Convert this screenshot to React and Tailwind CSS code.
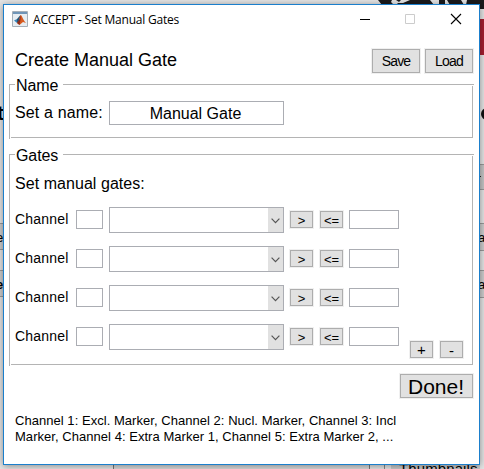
import React from 'react';

const font = "font-['Liberation_Sans',Arial,sans-serif]";

function Button({ className = '', children }) {
  return (
    <button
      className={`flex shrink-0 items-center justify-center whitespace-nowrap border border-[#adadad] bg-[#e1e1e1] text-black ring-1 ring-[#f0f0f0] ${className}`}
    >
      {children}
    </button>
  );
}

function Panel({ title, className, children }) {
  return (
    <section className={`relative ml-[5px] w-[464px] border border-[#b4b4b4] ${className}`}>
      <h2 className="absolute -top-[10px] left-[5px] h-[19px] w-[48px] bg-white pl-px text-[16px] leading-[21px] tracking-[-0.1px]">
        {title}
      </h2>
      <i className="absolute -right-[2px] -top-px h-px w-px bg-[#b4b4b4]" />
      <i className="absolute -right-px top-0 h-px w-px bg-white" />
      <i className="absolute -bottom-[2px] -left-px h-px w-px bg-[#b4b4b4]" />
      <i className="absolute -bottom-px left-0 h-px w-px bg-white" />
      {children}
    </section>
  );
}

function GateRow() {
  return (
    <div className="flex h-[26px] items-center">
      <span className="w-[61px] pb-[2px] text-[14px] leading-[16px] tracking-[0.2px]">Channel</span>
      <div className="-mt-px h-[19px] w-[27px] border border-[#abadb3]" />
      <div className="ml-[6px] flex h-[26px] w-[175px] justify-end border border-[#abadb3]">
        <div className="flex w-[15px] items-center justify-center bg-[#e1e1e1]">
          <svg className="mt-[2px] h-[6px] w-[9px]" viewBox="0 0 9 6" fill="none" stroke="#555" strokeWidth="1.2">
            <path d="M.6 .7 4.5 4.6 8.4 .7" />
          </svg>
        </div>
      </div>
      <Button className="-mt-px ml-[6px] h-[17px] w-[23px] text-[13px]"><span className="pt-[2px]">&gt;</span></Button>
      <Button className="-mt-px ml-[7px] h-[17px] w-[23px] text-[13px]"><span className="pt-[2px]">&lt;=</span></Button>
      <div className="-mt-px ml-[6px] h-[19px] w-[50px] border border-[#abadb3]" />
    </div>
  );
}

function Backdrop() {
  return (
    <div className="absolute inset-0 overflow-hidden bg-[#e4e4e4]">
      <svg className="absolute left-[376px] top-0 h-[10px] w-[108px]" viewBox="0 0 108 10" fill="#1a1a1c">
        <path d="M2 0h14l-1 2 3 3H6zM20 0h5l-2 2zM34 0h20l4 5H20l2-2h5zM63 0h6v5h-6zM71 0h14l3 5H74zM91 0h17v9h-4V5H90z" />
      </svg>
      <div className="absolute left-[479px] top-[19px] h-[36px] w-[5px] bg-[#a31f2f]" />
      <div className="absolute left-[481px] top-[108px] h-[12px] w-[12px] rounded-full bg-[#111]" />
      <div className="absolute -left-[3px] top-[102px] text-[20px] font-bold leading-[22px]">t</div>
      <div className="absolute left-0 top-[223px] h-[27px] w-[4px] border-y border-[#999] bg-[#ccc] text-[13px] leading-[27px]"><span className="-ml-[4px]">e</span></div>
      <div className="absolute left-0 top-[270px] h-[27px] w-[4px] border-y border-[#999] bg-[#ccc] text-[13px] font-bold leading-[27px]"><span className="-ml-[4px]">e</span></div>
      <div className="absolute left-[478px] top-[164px] h-[26px] w-[8px] border-y border-[#999] bg-[#c4c4c4]">
        <div className="ml-[2px] mt-[11px] h-px w-px bg-[#222]" />
      </div>
      <div className="absolute left-[478px] top-[223px] h-[28px] w-[8px] border-y border-[#999] bg-[#ccc] text-[13px] leading-[27px]">a</div>
      <div className="absolute left-[478px] top-[270px] h-[28px] w-[8px] border-y border-[#999] bg-[#ccc] text-[13px] leading-[27px]">a</div>
      <div className="absolute left-[113px] top-[465px] h-[4px] w-[257px] border-x border-[#777] bg-[#d8d8d8]" />
      <div className="absolute left-[384px] top-[465px] h-[4px] w-px bg-[#888]" />
      <div className="absolute left-[391px] top-[459px] h-[20px] w-[89px] bg-[#c8c8c8] pl-[8px] text-[15px] leading-[20px] tracking-[0.1px]">Thumbnails</div>
    </div>
  );
}

export default function App() {
  return (
    <main className={`relative h-[469px] w-[484px] overflow-hidden text-black ${font}`}>
      <Backdrop />
      <div className="absolute left-[3px] top-[4px] flex h-[461px] w-[477px] flex-col border border-[#1b7fcc] bg-white shadow-[0_1px_7px_rgba(0,0,0,0.4)]">
        <header className="flex h-[29px] items-start pl-[8px]">
          <svg className="mt-[6px] h-[16px] w-[16px]" viewBox="0 0 16 16">
            <path d="M.5 .5h15v15H.5z" fill="#e7edf2" stroke="#a5afb8" />
            <path d="M1 1h14v2H1z" fill="#6f95b8" />
            <path d="M2 9.5 5 8l2 1.5L5 12z" fill="#3983b9" />
            <path d="M5 8 8.5 4 7 10 5 12z" fill="#275675" />
            <path d="M8.5 4C10 4 11 9 14 12L11 11 7.5 14 5 12 7 10z" fill="#d75b20" />
            <path d="M8.5 4C9 7 8 12 7.5 14L5 12 7 9z" fill="#8c2d1d" />
          </svg>
          <h1 className="ml-[5px] mt-[7px] flex-1 whitespace-nowrap font-['Open_Sans','Noto_Sans',sans-serif] text-[12px] leading-[16px] tracking-[-0.2px]">ACCEPT - Set Manual Gates</h1>
          <svg className="mr-[16px] mt-[8px] h-[12px] w-[103px]" viewBox="0 0 103 12" fill="none">
            <path d="M0 6.5h10" stroke="#000" />
            <path d="M45.5 1.5h9v9h-9z" stroke="#ccc" />
            <path d="M91 1 101 11M101 1 91 11" stroke="#000" strokeWidth="1.1" />
          </svg>
        </header>
        <div className="flex h-[50px] pl-[11px] pt-[15px]">
          <p className="w-[357px] pt-px text-[18px] leading-[20px]">Create Manual Gate</p>
          <Button className="h-[24px] w-[48px] text-[14px] tracking-[-0.8px]"><span className="pt-px">Save</span></Button>
          <Button className="ml-[5px] h-[24px] w-[48px] text-[14px] tracking-[-0.8px]"><span className="pt-px">Load</span></Button>
        </div>
        <Panel title="Name" className="h-[54px]">
          <div className="flex pl-[5px] pt-[16px]">
            <label className="w-[94px] pt-[3px] text-[16px] leading-[18px] tracking-[0.15px]">Set a name:</label>
            <div className="h-[24px] w-[175px] border border-[#abadb3] pr-[2px] text-center text-[16px] leading-[24px]">Manual Gate</div>
          </div>
        </Panel>
        <Panel title="Gates" className="mt-[16px] h-[211px]">
          <p className="ml-[5px] mt-[20px] text-[16px] leading-[18px] tracking-[0.05px]">Set manual gates:</p>
          <div className="ml-[5px] mt-[14px] flex flex-col gap-[13px]">
            <GateRow />
            <GateRow />
            <GateRow />
            <GateRow />
          </div>
          <div className="-mt-[9px] ml-[400px] flex gap-[7px]">
            <Button className="h-[17px] w-[23px] text-[15px]"><span className="pt-[2px]">+</span></Button>
            <Button className="h-[17px] w-[23px] text-[15px]"><span className="pt-[3px]">-</span></Button>
          </div>
        </Panel>
        <Button className="ml-[396px] mt-[9px] h-[24px] w-[73px] text-[21px] leading-[24px]"><span className="pr-px pt-px">Done!</span></Button>
        <p className="ml-[11px] mt-[15px] whitespace-nowrap text-[13px] leading-[16px] tracking-[0.04px]">
          Channel 1: Excl. Marker, Channel 2: Nucl. Marker, Channel 3: Incl
          <br />
          Marker, Channel 4: Extra Marker 1, Channel 5: Extra Marker 2, ...
        </p>
      </div>
    </main>
  );
}
